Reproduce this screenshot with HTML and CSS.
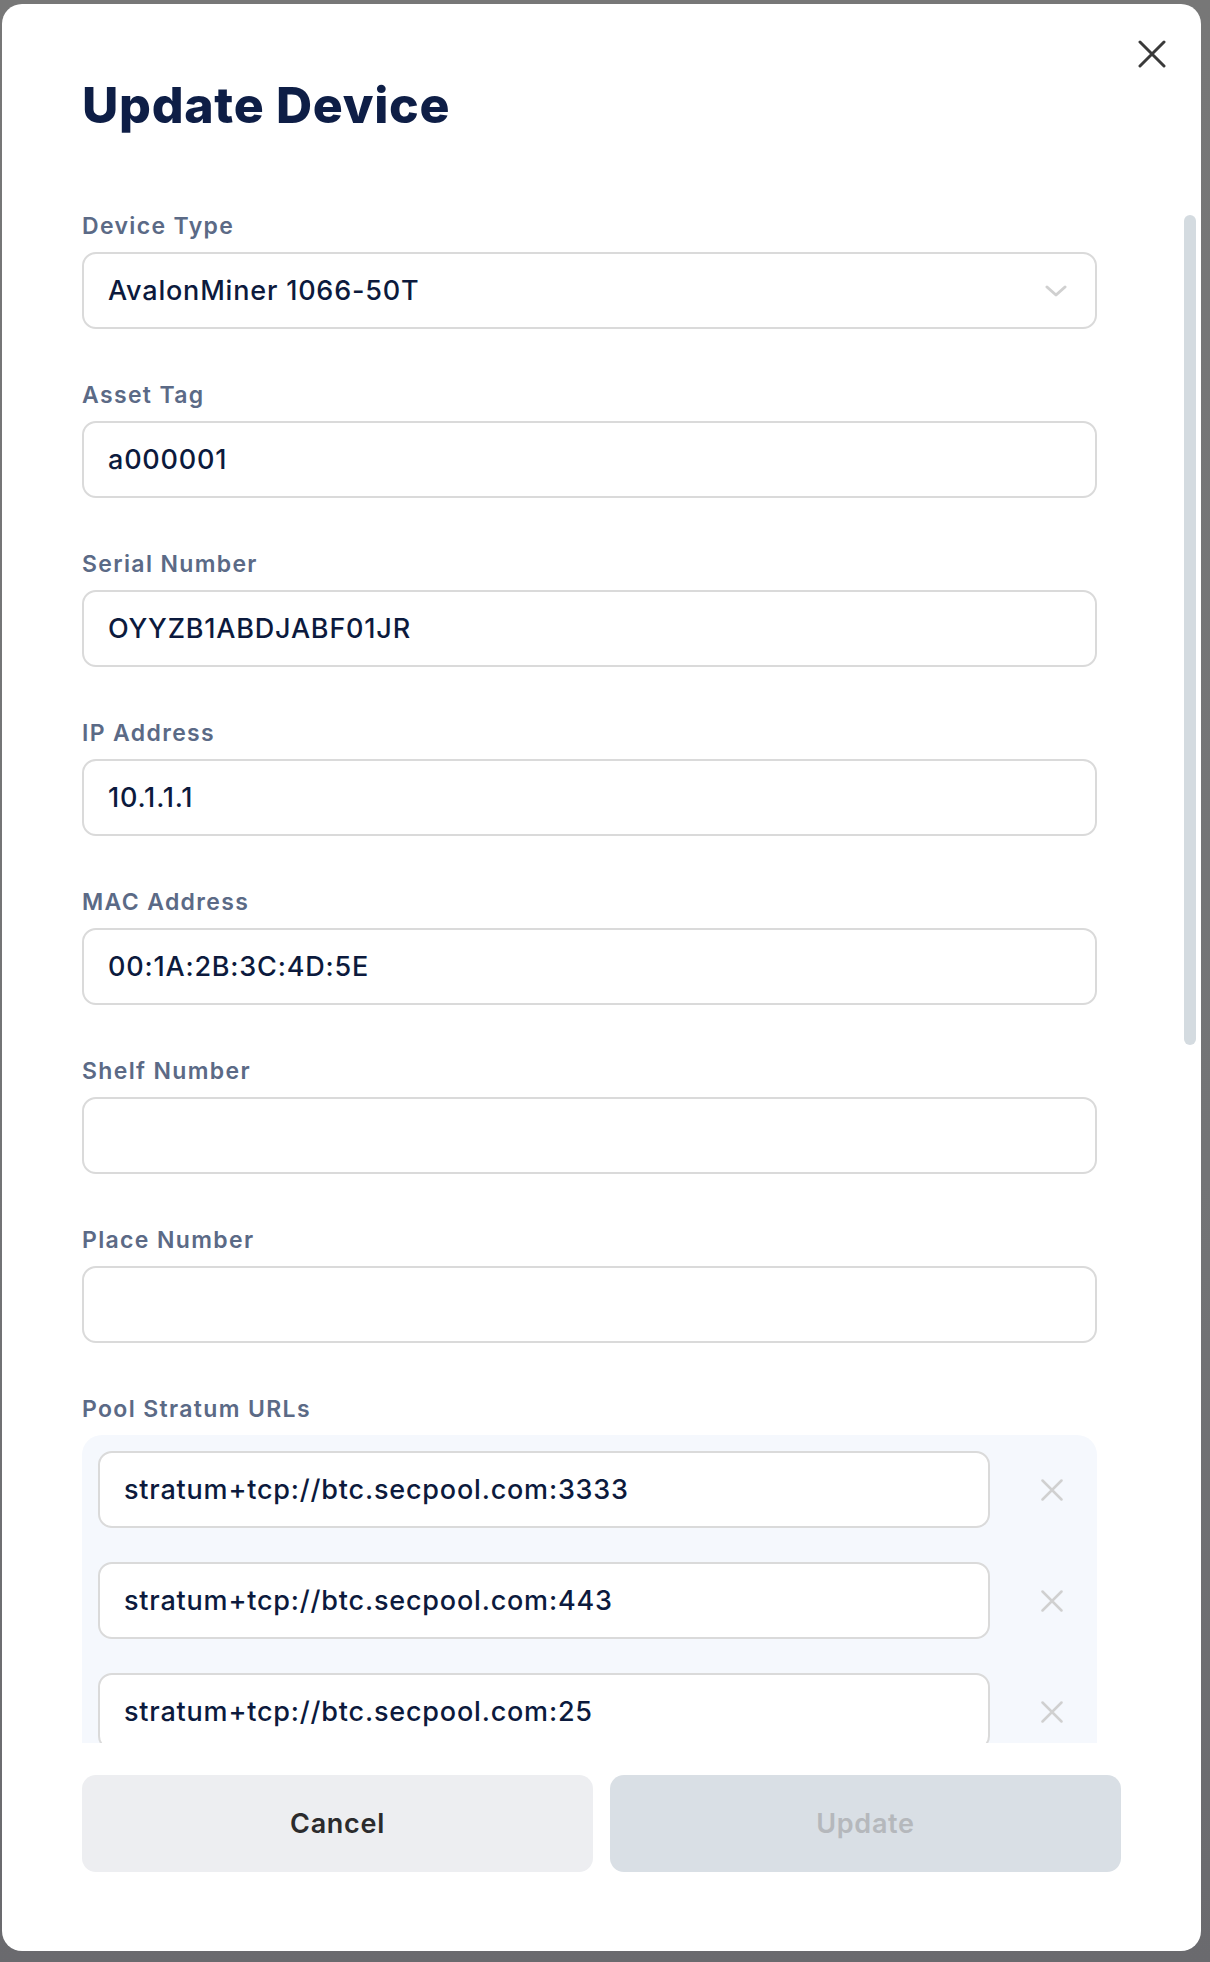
FILE: index.html
```html
<!DOCTYPE html>
<html lang="en">
<head>
<meta charset="utf-8">
<title>Update Device</title>
<link rel="stylesheet" href="styles.css">
</head>
<body>
<div class="modal">
  <button class="close" type="button" aria-label="Close">
    <svg width="28" height="28" viewBox="0 0 28 28"><path d="M2 2 L26 26 M26 2 L2 26" stroke="#3a3a3a" stroke-width="3" stroke-linecap="round" fill="none"/></svg>
  </button>
  <h1 class="title">Update Device</h1>
  <div class="scroll">
    <form class="form">
      <div class="field">
        <label class="label">Device Type</label>
        <div class="select">
          <span class="select-value">AvalonMiner 1066-50T</span>
          <svg class="chevron" width="22" height="12" viewBox="0 0 22 12"><path d="M2 2 L11 10 L20 2" stroke="#d0d0d0" stroke-width="3" stroke-linecap="round" stroke-linejoin="round" fill="none"/></svg>
        </div>
      </div>
      <div class="field">
        <label class="label">Asset Tag</label>
        <input class="input" type="text" value="a000001">
      </div>
      <div class="field">
        <label class="label">Serial Number</label>
        <input class="input" type="text" value="OYYZB1ABDJABF01JR">
      </div>
      <div class="field">
        <label class="label">IP Address</label>
        <input class="input" type="text" value="10.1.1.1">
      </div>
      <div class="field">
        <label class="label">MAC Address</label>
        <input class="input" type="text" value="00:1A:2B:3C:4D:5E">
      </div>
      <div class="field">
        <label class="label">Shelf Number</label>
        <input class="input" type="text" value="">
      </div>
      <div class="field">
        <label class="label">Place Number</label>
        <input class="input" type="text" value="">
      </div>
      <div class="field">
        <label class="label">Pool Stratum URLs</label>
        <div class="pool">
          <div class="pool-row">
            <input class="input" type="text" value="stratum+tcp://btc.secpool.com:3333">
            <button class="remove" type="button" aria-label="Remove"><svg width="22" height="22" viewBox="0 0 22 22"><path d="M1.5 1.5 L20.5 20.5 M20.5 1.5 L1.5 20.5" stroke="#d0d0d0" stroke-width="2.5" stroke-linecap="round" fill="none"/></svg></button>
          </div>
          <div class="pool-row">
            <input class="input" type="text" value="stratum+tcp://btc.secpool.com:443">
            <button class="remove" type="button" aria-label="Remove"><svg width="22" height="22" viewBox="0 0 22 22"><path d="M1.5 1.5 L20.5 20.5 M20.5 1.5 L1.5 20.5" stroke="#d0d0d0" stroke-width="2.5" stroke-linecap="round" fill="none"/></svg></button>
          </div>
          <div class="pool-row">
            <input class="input" type="text" value="stratum+tcp://btc.secpool.com:25">
            <button class="remove" type="button" aria-label="Remove"><svg width="22" height="22" viewBox="0 0 22 22"><path d="M1.5 1.5 L20.5 20.5 M20.5 1.5 L1.5 20.5" stroke="#d0d0d0" stroke-width="2.5" stroke-linecap="round" fill="none"/></svg></button>
          </div>
        </div>
      </div>
    </form>
    <div class="scrollbar" aria-hidden="true"><div class="scrollbar-thumb"></div></div>
  </div>
  <div class="footer">
    <button class="btn btn-cancel" type="button">Cancel</button>
    <button class="btn btn-update" type="button" disabled>Update</button>
  </div>
</div>
</body>
</html>
```

FILE: styles.css
```css
html, body {
  margin: 0;
  height: 1962px;
}

body {
  background: linear-gradient(180deg, #777777 0%, #737476 60%, #6a6a6e 100%);
  padding: 4px 0 0 2px;
  box-sizing: border-box;
  font-family: Inter, "Noto Sans", sans-serif;
  overflow: hidden;
}

.modal {
  position: relative;
  width: 1199px;
  height: 1947px;
  background: #ffffff;
  border-radius: 20px;
  display: flex;
  flex-direction: column;
  box-sizing: border-box;
  padding: 71px 0 79px 0;
}

.close {
  position: absolute;
  top: 36px;
  right: 35px;
  width: 28px;
  height: 28px;
  padding: 0;
  border: 0;
  background: none;
  display: flex;
}

.title {
  margin: 0 0 77px 80px;
  font-size: 50px;
  line-height: 60px;
  font-weight: 800;
  color: #0e1e46;
  letter-spacing: 0.7px;
}

.scroll {
  height: 1531px;
  margin: 0 5px 0 80px;
  display: flex;
  overflow: hidden;
}

.form {
  flex: 1;
  min-width: 0;
  display: flex;
  flex-direction: column;
  gap: 52px;
  padding: 0 87px 0 0;
  overflow: hidden;
}

.scrollbar {
  width: 12px;
  flex: none;
  padding-top: 3px;
}

.scrollbar-thumb {
  height: 830px;
  background: #d4dbe0;
  border-radius: 6px;
}

.field {
  display: flex;
  flex-direction: column;
  flex: none;
}

.label {
  font-size: 23px;
  line-height: 28px;
  font-weight: 600;
  color: #5b6a86;
  letter-spacing: 1.35px;
  margin-bottom: 12px;
}

.input,
.select {
  width: 100%;
  height: 77px;
  box-sizing: border-box;
  border: 2px solid #dadada;
  border-radius: 14px;
  background: #ffffff;
  padding: 0 24px;
  font-family: Inter, "Noto Sans", sans-serif;
  font-size: 27px;
  font-weight: 500;
  letter-spacing: 0.8px;
  color: #0c1a3d;
  outline: none;
}

.select {
  display: flex;
  align-items: center;
  justify-content: space-between;
  padding-right: 28px;
}

.chevron {
  display: block;
}

.pool {
  background: #f5f8fd;
  border-radius: 20px;
  padding: 16px 23px 16px 16px;
  display: flex;
  flex-direction: column;
  gap: 34px;
}

.pool-row {
  display: flex;
  align-items: center;
  gap: 40px;
}

.pool-row .input {
  flex: 1;
  width: auto;
  min-width: 0;
}

.remove {
  width: 44px;
  height: 44px;
  padding: 0;
  border: 0;
  background: none;
  display: flex;
  align-items: center;
  justify-content: center;
}

.footer {
  display: flex;
  gap: 17px;
  padding: 0 80px;
  margin-top: 32px;
}

.btn {
  flex: 1;
  height: 97px;
  border: 0;
  border-radius: 14px;
  font-family: Inter, "Noto Sans", sans-serif;
  font-size: 27px;
  font-weight: 600;
  letter-spacing: 0.7px;
}

.btn-cancel {
  background: #edeef1;
  color: #2b2b2d;
}

.btn-update {
  background: #d9dfe5;
  color: #b5b8bc;
}
```
